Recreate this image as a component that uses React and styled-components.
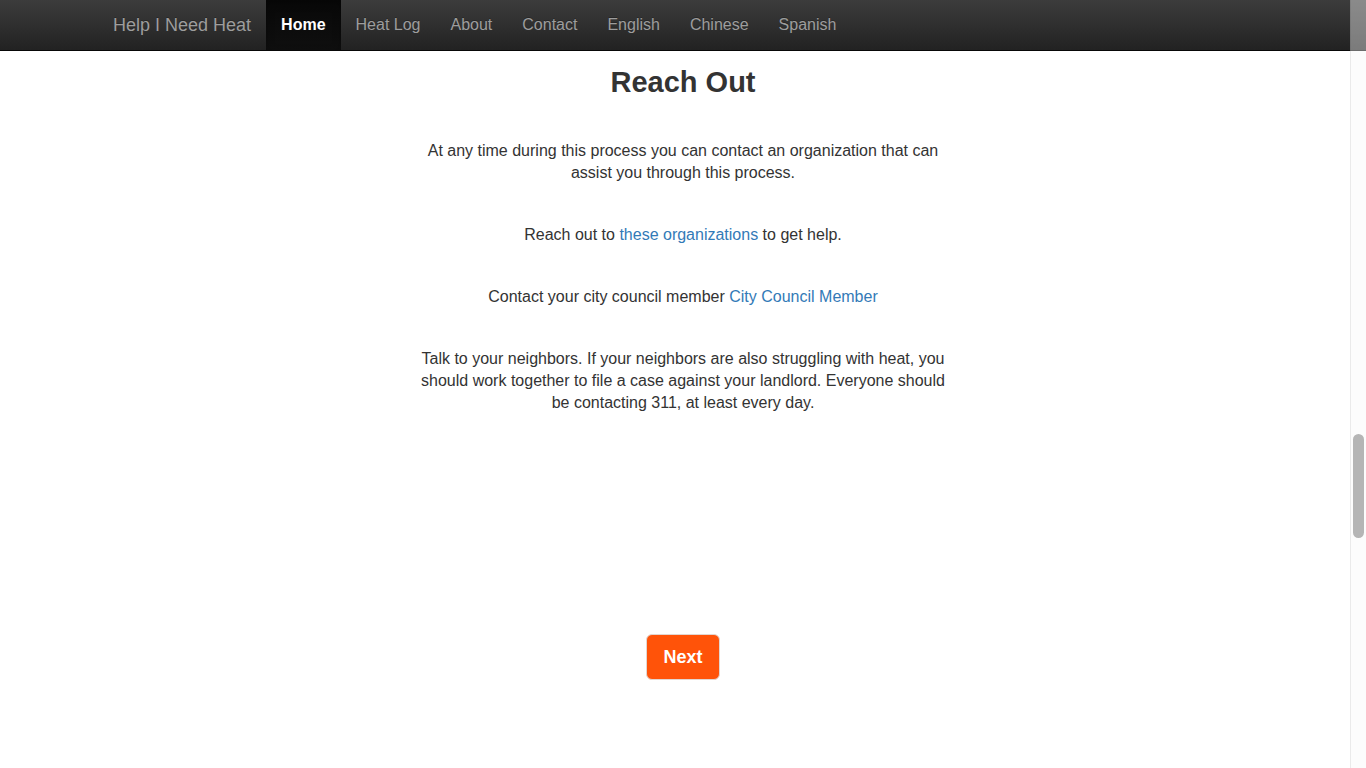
import React from "react";
import styled, { createGlobalStyle } from "styled-components";

const GlobalStyle = createGlobalStyle`
  html, body {
    margin: 0;
    padding: 0;
    overflow: hidden;
    background: #fff;
  }
  body {
    font-family: "Liberation Sans", Arial, Helvetica, sans-serif;
    font-size: 16px;
    line-height: 22px;
    color: #333;
  }
  * {
    box-sizing: border-box;
  }
`;

const NAV_ITEMS = ["Home", "Heat Log", "About", "Contact", "English", "Chinese", "Spanish"];

export default function App() {
  return (
    <>
      <GlobalStyle />
      <Navbar>
        <NavContainer>
          <Brand href="#">Help I Need Heat</Brand>
          <NavList>
            {NAV_ITEMS.map((item) => (
              <li key={item}>
                <NavLink href="#" active={item === "Home" ? 1 : 0}>
                  {item}
                </NavLink>
              </li>
            ))}
          </NavList>
        </NavContainer>
      </Navbar>
      <Main>
        <Title>Reach Out</Title>
        <Copy>
          <p>
            At any time during this process you can contact an organization
            that can assist you through this process.
          </p>
          <p>
            Reach out to <TextLink href="#">these organizations</TextLink> to
            get help.
          </p>
          <p>
            Contact your city council member{" "}
            <TextLink href="#">City Council Member</TextLink>
          </p>
          <p>
            Talk to your neighbors. If your neighbors are also struggling with
            heat, you should work together to file a case against your
            landlord. Everyone should be contacting 311, at least every day.
          </p>
        </Copy>
        <NextButton type="button">Next</NextButton>
      </Main>
      <ScrollTrack>
        <ScrollThumb />
      </ScrollTrack>
    </>
  );
}

const Navbar = styled.nav`
  height: 51px;
  background: linear-gradient(to bottom, #3c3c3c 0%, #222 100%);
  border-bottom: 1px solid #080808;
`;

const NavContainer = styled.div`
  width: 1170px;
  margin: 0 auto;
  display: flex;
  align-items: stretch;
  height: 50px;
`;

const Brand = styled.a`
  display: block;
  padding: 15px;
  font-size: 18px;
  line-height: 20px;
  color: #9d9d9d;
  text-decoration: none;
  text-shadow: 0 -1px 0 rgba(0, 0, 0, 0.25);
`;

const NavList = styled.ul`
  display: flex;
  list-style: none;
  margin: 0;
  padding: 0;
`;

const NavLink = styled.a`
  display: block;
  padding: 15px;
  font-size: 16px;
  line-height: 20px;
  text-decoration: none;
  color: ${(p) => (p.active ? "#fff" : "#9d9d9d")};
  font-weight: ${(p) => (p.active ? "bold" : "normal")};
  background: ${(p) =>
    p.active ? "linear-gradient(to bottom, #080808 0%, #0f0f0f 100%)" : "transparent"};
  box-shadow: ${(p) => (p.active ? "inset 0 3px 9px rgba(0, 0, 0, 0.25)" : "none")};
  text-shadow: 0 -1px 0 rgba(0, 0, 0, 0.25);
`;

const Main = styled.main`
  display: flex;
  flex-direction: column;
  align-items: center;
  padding-top: 15px;
`;

const Title = styled.h2`
  margin: 0 0 41px;
  font-size: 29px;
  line-height: 33px;
  font-weight: bold;
  color: #333;
`;

const Copy = styled.div`
  width: 540px;
  text-align: center;

  p {
    margin: 0 0 40px;
  }
`;

const TextLink = styled.a`
  color: #337ab7;
  text-decoration: none;
`;

const NextButton = styled.button`
  margin-top: 180px;
  padding: 10px 16px;
  font-family: "Liberation Sans", Arial, Helvetica, sans-serif;
  font-size: 18px;
  line-height: 24px;
  font-weight: bold;
  color: #fff;
  background: #ff5309;
  border: 1px solid #e2d6d0;
  border-radius: 6px;
  cursor: pointer;
`;

const ScrollTrack = styled.div`
  position: fixed;
  top: 0;
  right: 0;
  width: 16px;
  height: 100vh;
  background: rgba(248, 248, 248, 0.42);
  border-left: 1px solid rgba(0, 0, 0, 0.07);
  z-index: 10;
`;

const ScrollThumb = styled.div`
  position: absolute;
  top: 434px;
  left: 2px;
  width: 11px;
  height: 104px;
  border-radius: 6px;
  background: #b5b5b5;
`;
